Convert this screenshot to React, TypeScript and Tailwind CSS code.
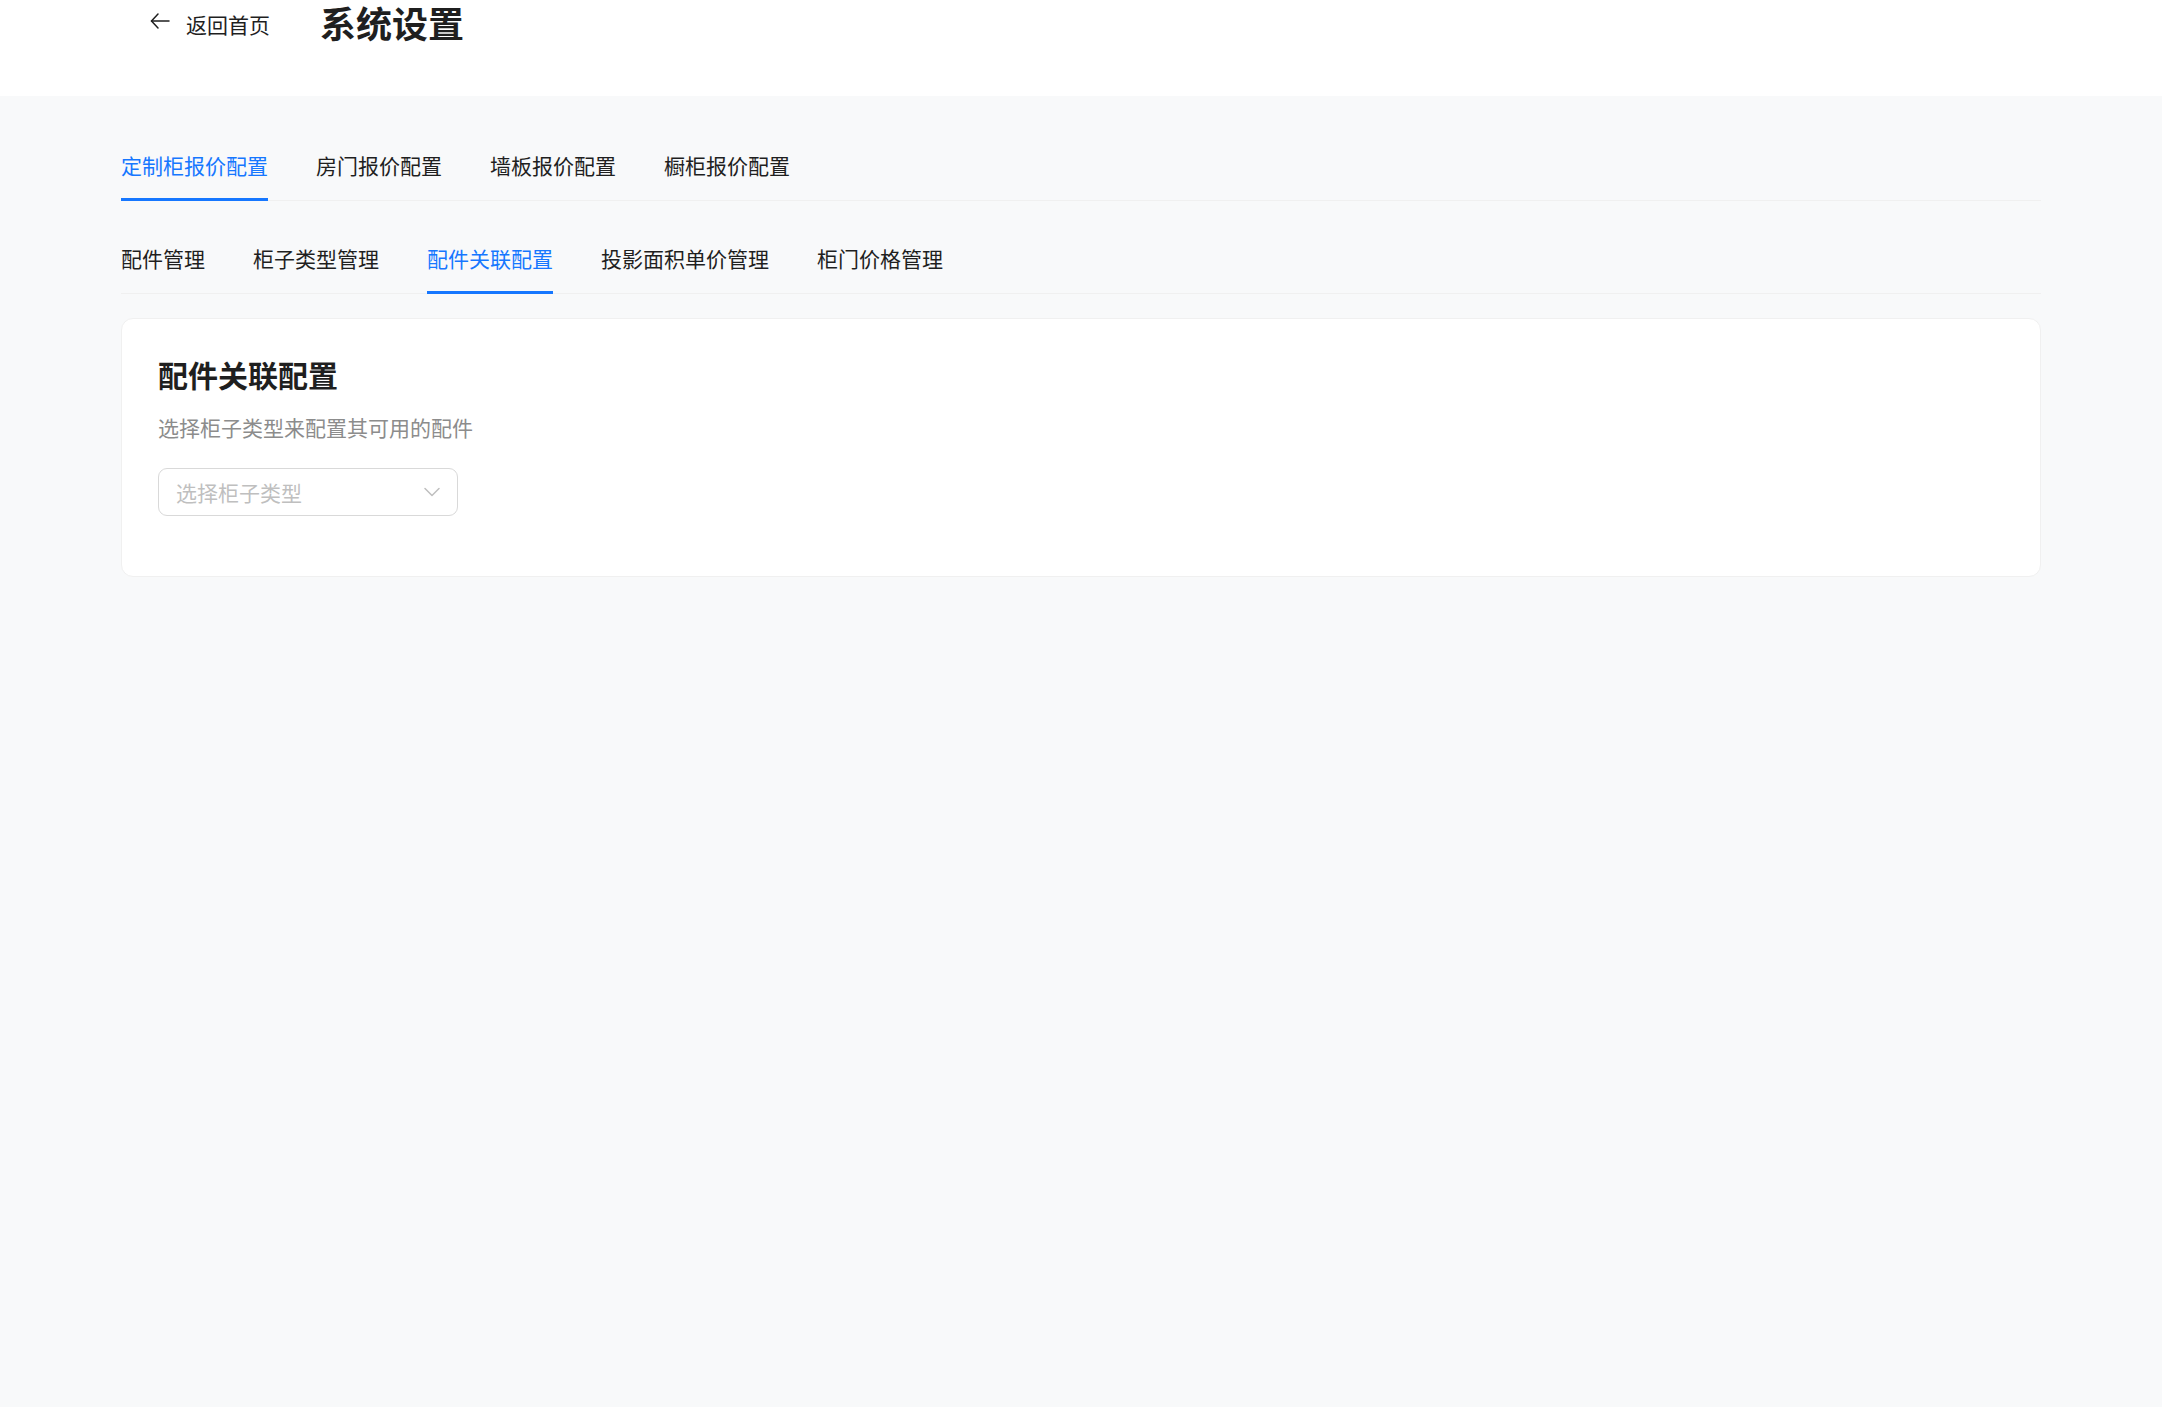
import React from 'react'

const topTabs = ['定制柜报价配置', '房门报价配置', '墙板报价配置', '橱柜报价配置']
const subTabs = ['配件管理', '柜子类型管理', '配件关联配置', '投影面积单价管理', '柜门价格管理']

function Tabs({ items, active }: { items: string[]; active: number }) {
  return (
    <div className="flex gap-[48px] border-b border-[#f0f0f0]">
      {items.map((t, i) => (
        <div
          key={t}
          className={
            'relative py-[18px] text-[21px] leading-[33px] cursor-pointer ' +
            (i === active ? 'text-[#1677ff]' : 'text-[#1f1f1f]')
          }
        >
          {t}
          {i === active && <div className="absolute left-0 right-0 -bottom-px h-[3px] bg-[#1677ff]" />}
        </div>
      ))}
    </div>
  )
}

export default function App() {
  return (
    <div
      className="min-h-screen bg-[#f8f9fa] text-[#1f1f1f]"
      style={{ fontFamily: '"Noto Sans CJK SC", "Noto Sans", sans-serif' }}
    >
      <header className="bg-white h-[96px]">
        <div className="flex items-start pl-[148px]">
          <button className="mt-[7.5px] flex items-center gap-[14px] text-[21px] leading-[33px] text-[#1f1f1f]">
            <svg width="24" height="24" viewBox="0 0 24 24" fill="none" stroke="currentColor" strokeWidth="1.5" strokeLinecap="round" strokeLinejoin="round" className="-mt-[7px]">
              <path d="M21 12H3.5" />
              <path d="M10 5 3.5 12 10 19" />
            </svg>
            返回首页
          </button>
          <h1 className="ml-[50px] mt-[3px] text-[36px] leading-[38px] font-bold">系统设置</h1>
        </div>
      </header>

      <main className="w-[1920px] mx-auto pt-[35px]">
        <Tabs items={topTabs} active={0} />
        <div className="mt-[23px]">
          <Tabs items={subTabs} active={2} />
        </div>

        <div className="mt-[24px] bg-white border border-[#f0f0f0] rounded-[12px] px-[36px] pt-[33px] pb-[60px]">
          <h2 className="text-[30px] leading-[44px] font-bold">配件关联配置</h2>
          <p className="mt-[15px] text-[21px] leading-[33px] text-[#8c8c8c]">选择柜子类型来配置其可用的配件</p>
          <div className="mt-[24px] w-[300px] h-[48px] border border-[#d9d9d9] rounded-[9px] pl-[17px] pr-[17px] flex items-center justify-between">
            <span className="text-[21px] leading-[33px] text-[#bfbfbf]">选择柜子类型</span>
            <svg width="16" height="12" viewBox="0 0 16 12" fill="none" stroke="#bfbfbf" strokeWidth="1.5" strokeLinecap="round" strokeLinejoin="round">
              <polyline points="1,2.5 8,9.5 15,2.5" />
            </svg>
          </div>
        </div>
      </main>
    </div>
  )
}
